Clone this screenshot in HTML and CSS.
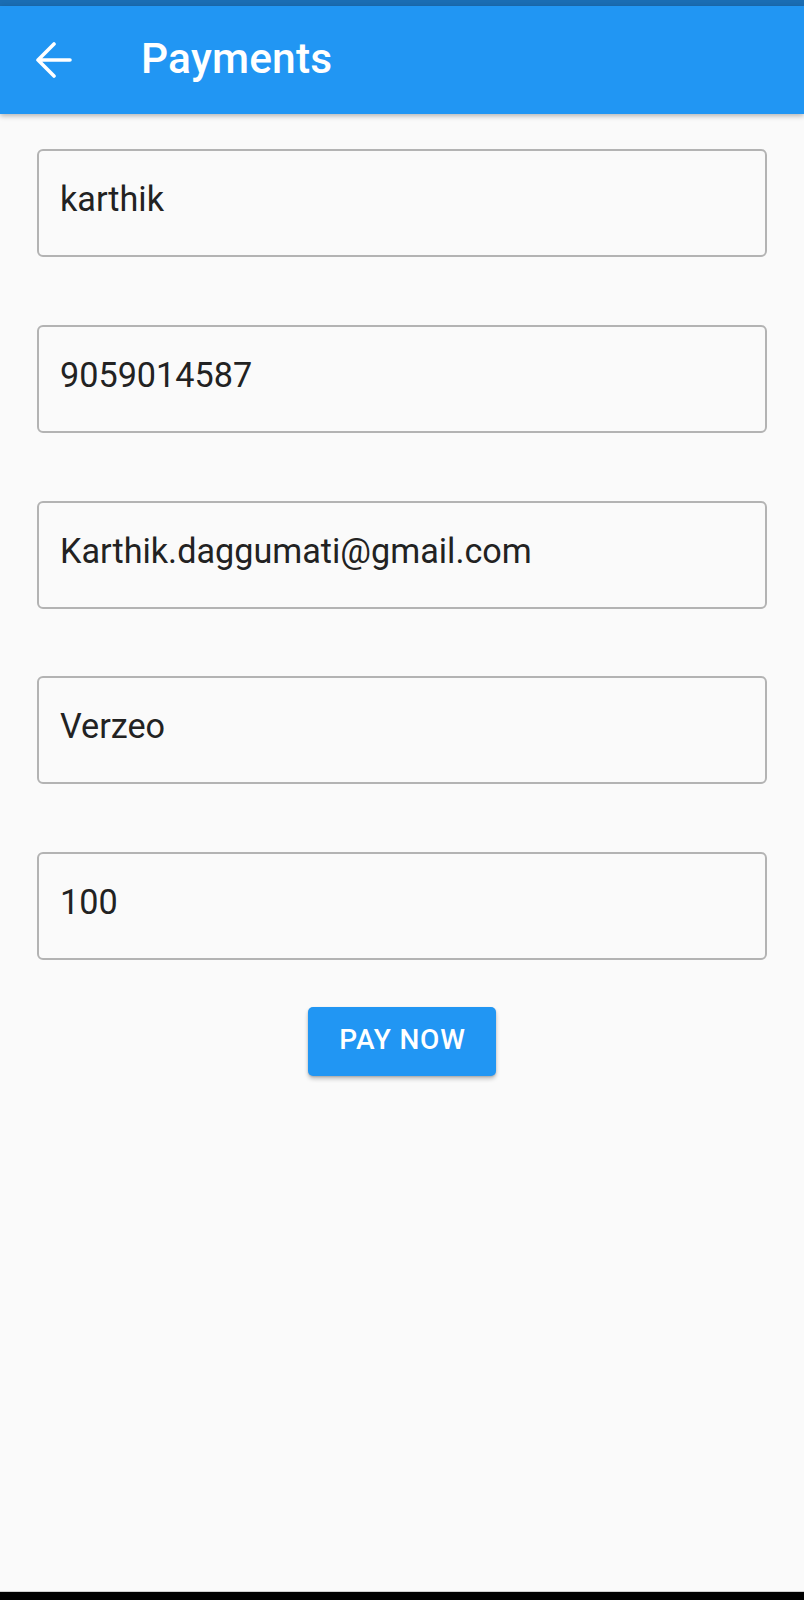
FILE: index.html
```html
<!DOCTYPE html>
<html lang="en">
<head>
<meta charset="utf-8">
<title>Payments</title>
<link rel="stylesheet" href="styles.css">
</head>
<body>
<div class="page">
  <div class="status-strip"></div>
  <header class="app-bar">
    <svg class="back-icon" width="36" height="36" viewBox="0 0 36 36" aria-hidden="true">
      <path d="M2 18H34 M18 2L2 18L18 34" fill="none" stroke="#fff" stroke-width="3.6" stroke-linecap="round" stroke-linejoin="round"/>
    </svg>
    <h1 class="title">Payments</h1>
  </header>
  <main class="content">
    <div class="field">karthik</div>
    <div class="field">9059014587</div>
    <div class="field">Karthik.daggumati@gmail.com</div>
    <div class="field">Verzeo</div>
    <div class="field">100</div>
    <div class="actions">
      <button class="pay-btn" type="button">PAY NOW</button>
    </div>
  </main>
  <div class="nav-strip"></div>
</div>
</body>
</html>
```
FILE: styles.css
```css
* { box-sizing: border-box; }
html, body {
  margin: 0;
  padding: 0;
  background: #fafafa;
}
body {
  font-family: Roboto, "Noto Sans", "Liberation Sans", sans-serif;
}
.page {
  min-height: 100vh;
  display: flex;
  flex-direction: column;
}
.status-strip {
  height: 6px;
  background: #1a6db3;
}
.app-bar {
  height: 108px;
  background: #2196f3;
  display: flex;
  align-items: center;
  padding-left: 36px;
  box-shadow: 0 2px 5px rgba(0, 0, 0, 0.28);
  position: relative;
  z-index: 1;
}
.back-icon {
  display: block;
  flex: none;
}
.title {
  margin: 0 0 2px 69px;
  color: #fff;
  font-size: 42.5px;
  font-weight: 500;
  line-height: 48px;
  letter-spacing: 0.2px;
}
.content {
  flex: 1;
  padding: 35px 37px 0;
  display: flex;
  flex-direction: column;
  gap: 67.75px;
}
.field {
  height: 108px;
  border: 2px solid #b3b3b3;
  border-radius: 6px;
  padding: 28px 20px 0 21px;
  font-size: 34.2px;
  line-height: 40px;
  color: #222;
}
.actions {
  display: flex;
  justify-content: center;
  margin-top: -20.75px;
}
.pay-btn {
  width: 188px;
  height: 69px;
  border: none;
  border-radius: 5px;
  background: #2196f3;
  color: #fff;
  font-family: Roboto, "Noto Sans", sans-serif;
  font-size: 28px;
  font-weight: 500;
  letter-spacing: 0.8px;
  padding: 0 0 4px 1px;
  box-shadow: 0 3px 4px rgba(0, 0, 0, 0.22), 0 1px 2px rgba(0, 0, 0, 0.15);
}
.nav-strip {
  height: 9px;
  background: #000;
  border-top: 1px solid #cfcfcf;
}
```
